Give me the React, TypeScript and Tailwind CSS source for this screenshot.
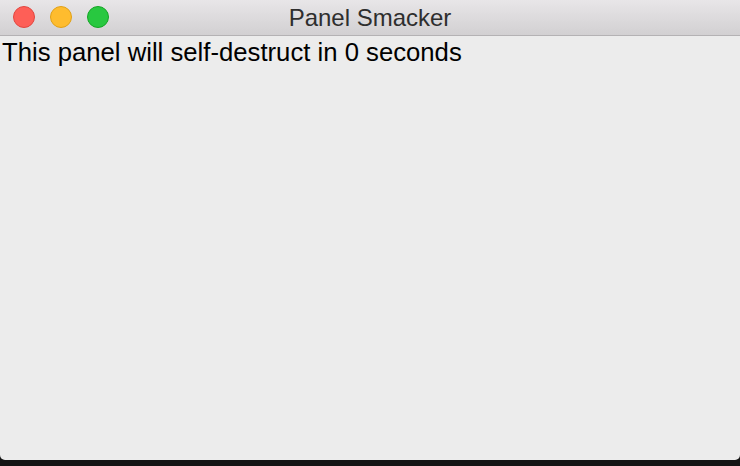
import React from 'react';

const App: React.FC = () => {
  return (
    <div className="w-[740px] h-[466px] bg-[#141414] flex flex-col" style={{ fontFamily: '"Liberation Sans", Arial, sans-serif' }}>
      <div className="h-[460px] rounded-b-[5px] overflow-hidden bg-[#ececec] flex flex-col">
        {/* Title bar */}
        <div className="h-[36px] shrink-0 relative flex items-center justify-center bg-gradient-to-b from-[#e8e6e8] to-[#d2d0d2] border-b border-[#b4b2b4]">
          <div className="absolute left-[13px] top-[6px] flex gap-[15px]">
            <span className="w-[22px] h-[22px] rounded-full bg-[#fe5f57] border border-[#e2463f]" />
            <span className="w-[22px] h-[22px] rounded-full bg-[#febc2e] border border-[#e1a116]" />
            <span className="w-[22px] h-[22px] rounded-full bg-[#28c840] border border-[#13a624]" />
          </div>
          <span className="text-[24px] text-[#2e2e2e] leading-none mt-[1px]">Panel Smacker</span>
        </div>
        {/* Content */}
        <div className="flex-1 px-[2px] pt-[1px]">
          <p className="text-[25.7px] leading-[30px] text-black">This panel will self-destruct in 0 seconds</p>
        </div>
      </div>
    </div>
  );
};

export default App;
